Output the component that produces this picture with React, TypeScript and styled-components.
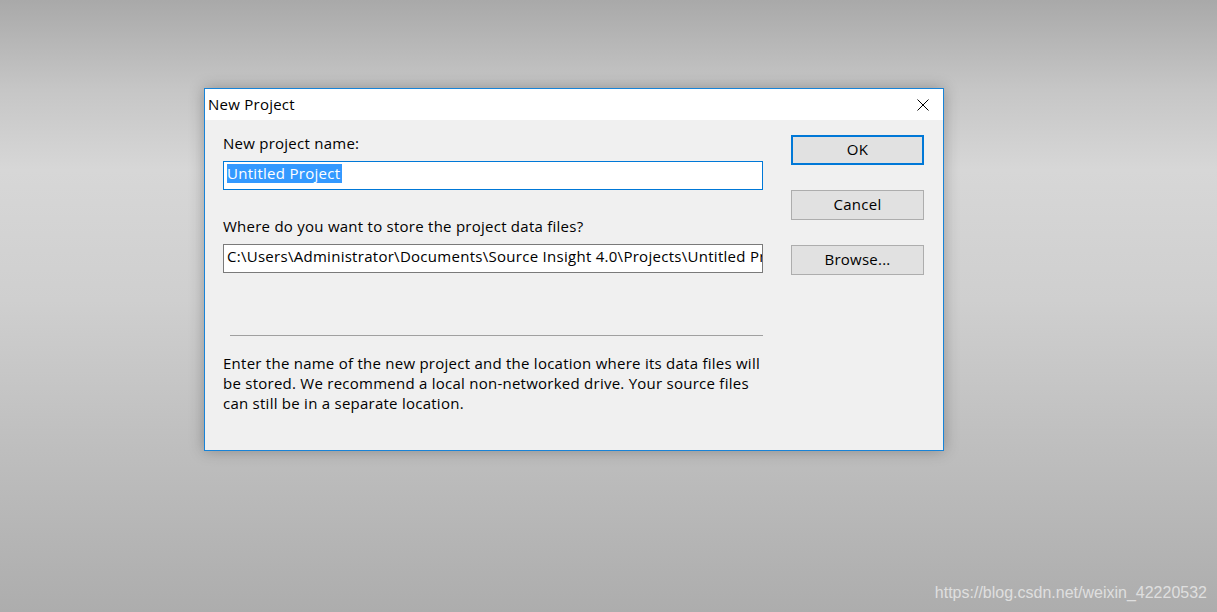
import React from "react";
import styled, { createGlobalStyle } from "styled-components";

const Global = createGlobalStyle`
  html, body { margin: 0; padding: 0; }
  body { font-family: "Segoe UI", "Open Sans", "Noto Sans", sans-serif; }
`;

const Desktop = styled.div`
  position: relative;
  width: 1217px;
  height: 612px;
  box-sizing: border-box;
  padding: 88px 0 0 204px;
  background: linear-gradient(
    to bottom,
    #a9a9a9 0px,
    #c6c6c6 90px,
    #d7d7d7 170px,
    #cfcfcf 300px,
    #bebebe 450px,
    #adadad 612px
  );
  overflow: hidden;
`;

const Window = styled.div`
  width: 740px;
  height: 363px;
  box-sizing: border-box;
  border: 1px solid #1883d7;
  background: #f0f0f0;
  box-shadow: 0 0 14px rgba(0, 0, 0, 0.28);
  display: flex;
  flex-direction: column;
`;

const TitleBar = styled.div`
  height: 31px;
  background: #ffffff;
  display: flex;
  align-items: center;
  justify-content: space-between;
  padding-left: 3px;
`;

const Title = styled.span`
  font-size: 15px;
  letter-spacing: 0.25px;
  color: #000;
  line-height: 20px;
  padding-bottom: 1px;
`;

const CloseBox = styled.div`
  width: 40px;
  height: 31px;
  display: flex;
  align-items: center;
  justify-content: center;
`;

const Body = styled.div`
  display: flex;
  gap: 28px;
  padding: 13px 0 0 18px;
`;

const LeftCol = styled.div`
  width: 540px;
  display: flex;
  flex-direction: column;
`;

const RightCol = styled.div`
  width: 133px;
  display: flex;
  flex-direction: column;
  gap: 25px;
  padding-top: 2px;
`;

const Label = styled.div<{ $mt?: number }>`
  font-size: 15px;
  letter-spacing: 0.25px;
  line-height: 20px;
  color: #000;
  margin-top: ${(p) => p.$mt ?? 0}px;
  white-space: nowrap;
`;

const Field = styled.div<{ $focused?: boolean; $mt?: number }>`
  height: 29px;
  box-sizing: border-box;
  margin-top: ${(p) => p.$mt ?? 0}px;
  border: 1px solid ${(p) => (p.$focused ? "#0078d7" : "#7a7a7a")};
  background: #fff;
  padding: 2px 0 0 3px;
  font-size: 15px;
  letter-spacing: 0.28px;
  line-height: 19px;
  color: #000;
  white-space: nowrap;
  overflow: hidden;
`;

const Selected = styled.span`
  background: #3399ff;
  color: #fff;
  display: inline-block;
  padding-right: 2px;
`;

const Separator = styled.div`
  margin: 62px 0 0 7px;
  width: 533px;
  height: 1px;
  background: #a0a0a0;
`;

const Paragraph = styled.p`
  margin: 17px 0 0 0;
  font-size: 15px;
  letter-spacing: 0.25px;
  line-height: 20px;
  color: #000;
  white-space: nowrap;
`;

const Button = styled.button<{ $default?: boolean }>`
  width: 133px;
  height: 30px;
  box-sizing: border-box;
  background: #e1e1e1;
  border: ${(p) => (p.$default ? "2px solid #0078d7" : "1px solid #adadad")};
  font-family: inherit;
  font-size: 15px;
  letter-spacing: 0.25px;
  line-height: 20px;
  color: #000;
  padding: 0 0 3px 0;
  margin: 0;
`;

const Watermark = styled.div`
  position: absolute;
  right: 10px;
  bottom: 10px;
  font-family: "Liberation Sans", Arial, sans-serif;
  font-size: 16px;
  color: rgba(236, 236, 236, 0.8);
`;

export default function App() {
  return (
    <>
      <Global />
      <Desktop>
        <Window>
          <TitleBar>
            <Title>New Project</Title>
            <CloseBox>
              <svg width="12" height="12" viewBox="0 0 12 12">
                <path d="M0.5 0.5 L11.5 11.5 M11.5 0.5 L0.5 11.5" stroke="#000" strokeWidth="1" fill="none" />
              </svg>
            </CloseBox>
          </TitleBar>
          <Body>
            <LeftCol>
              <Label>New project name:</Label>
              <Field $focused $mt={8}>
                <Selected>Untitled Project</Selected>
              </Field>
              <Label $mt={26}>Where do you want to store the project data files?</Label>
              <Field $mt={8}>
                C:\Users\Administrator\Documents\Source Insight 4.0\Projects\Untitled Project
              </Field>
              <Separator />
              <Paragraph>
                Enter the name of the new project and the location where its data files will
                <br />
                be stored. We recommend a local non-networked drive. Your source files
                <br />
                can still be in a separate location.
              </Paragraph>
            </LeftCol>
            <RightCol>
              <Button $default>OK</Button>
              <Button>Cancel</Button>
              <Button>Browse...</Button>
            </RightCol>
          </Body>
        </Window>
        <Watermark>https://blog.csdn.net/weixin_42220532</Watermark>
      </Desktop>
    </>
  );
}
